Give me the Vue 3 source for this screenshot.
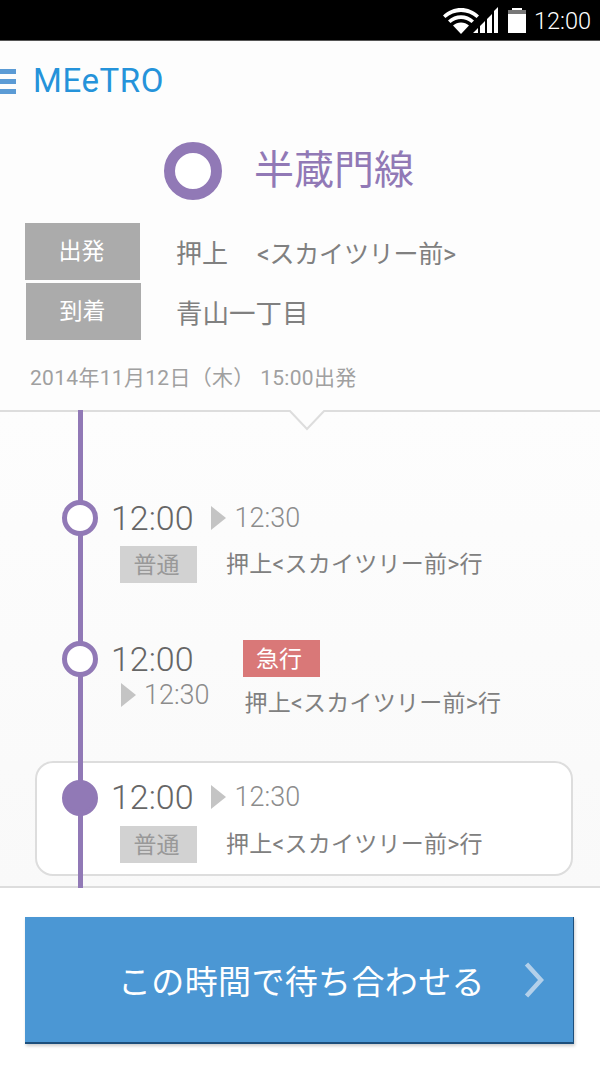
<script setup>
const dest = "押上<スカイツリー前>行";
</script>

<template>
  <div class="screen">
    <div class="status">
      <svg class="wifi" width="36" height="28" viewBox="0 0 36 28">
        <path d="M0 8.5C10-1.5 26-1.5 36 8.5L33.6 11C24.800 3 11.200 3 2.400 11Z" fill="#fff" />
        <path d="M5 13.500C12.500 6.500 23.500 6.500 31 13.500L28.500 16C22 10.500 14 10.500 7.500 16Z" fill="#fff" />
        <path d="M10 18.500C14.500 14.500 21.500 14.500 26 18.500L18 27Z" fill="#fff" />
      </svg>
      <svg class="signal" width="25" height="30" viewBox="0 0 25 30">
        <path d="M0 29L5 24V29ZM7 29V22L12 17V29ZM14 29V15L19 10V29ZM21 29V7L25 3V29Z" fill="#fff" />
      </svg>
      <svg class="battery" width="18" height="25" viewBox="0 0 18 25">
        <path d="M4 0H14V2H18V25H0V2H4Z" fill="#fff" />
        <path d="M0 2H18V6H0Z" fill="#777" />
      </svg>
      <span class="clock">12:00</span>
    </div>

    <header class="appbar">
      <div class="menu"><i></i><i></i><i></i></div>
      <span class="logo">MEeTRO</span>
    </header>

    <div class="line-title">
      <span class="ring"></span>
      <span class="line-name">半蔵門線</span>
    </div>

    <div class="stations">
      <div class="station">
        <span class="tag">出発</span>
        <span class="station-name">押上<span class="via">&lt;スカイツリー前&gt;</span></span>
      </div>
      <div class="station second">
        <span class="tag">到着</span>
        <span class="station-name">青山一丁目</span>
      </div>
    </div>

    <p class="date">2014年11月12日（木）&nbsp;15:00出発</p>

    <section class="timeline">
      <svg class="notch" width="38" height="21" viewBox="0 0 38 21">
        <path d="M1 0L19 19L37 0" fill="#fdfdfd" stroke="#dddddd" stroke-width="2" />
      </svg>
      <div class="track"></div>

      <div class="row first">
        <span class="node"></span>
        <div class="times">
          <span class="time">12:00</span>
          <span class="arrow"></span>
          <span class="arrive">12:30</span>
        </div>
        <div class="info">
          <span class="badge">普通</span>
          <span class="dest">{{ dest }}</span>
        </div>
      </div>

      <div class="row express">
        <span class="node"></span>
        <div class="left">
          <span class="time">12:00</span>
          <div class="sub">
            <span class="arrow"></span>
            <span class="arrive">12:30</span>
          </div>
        </div>
        <div class="right">
          <span class="badge red">急行</span>
          <span class="dest">{{ dest }}</span>
        </div>
      </div>

      <div class="row card">
        <span class="node solid"></span>
        <div class="times">
          <span class="time">12:00</span>
          <span class="arrow"></span>
          <span class="arrive">12:30</span>
        </div>
        <div class="info">
          <span class="badge">普通</span>
          <span class="dest">{{ dest }}</span>
        </div>
      </div>
    </section>

    <footer class="footer">
      <button class="go">
        <span>この時間で待ち合わせる</span>
        <svg class="chevron" width="20" height="36" viewBox="0 0 20 36">
          <path d="M2.500 2L17 18L2.500 34" fill="none" stroke="#b3d0ea" stroke-width="4.500" />
        </svg>
      </button>
    </footer>
  </div>
</template>

<style scoped>
.screen {
  width: 600px;
  height: 1067px;
  overflow: hidden;
  background: #fff;
  font-family: Roboto, "Noto Sans CJK JP", sans-serif;
  color: #808080;
}

.status {
  height: 40px;
  background: #000;
  border-bottom: 1px solid #555;
  box-sizing: content-box;
  display: flex;
  align-items: flex-start;
  justify-content: flex-end;
  padding-right: 9px;
}

.wifi {
  margin-top: 7px;
  margin-right: -6px;
}

.signal {
  margin-top: 4px;
  margin-right: 10px;
}

.battery {
  margin-top: 8px;
  margin-right: 8px;
}

.clock {
  color: #fff;
  font-size: 23.500px;
  font-weight: 300;
  line-height: 42px;
}

.appbar {
  height: 80px;
  display: flex;
  align-items: center;
  gap: 17px;
  background: #fdfdfd;
}

.menu {
  width: 16px;
  display: flex;
  flex-direction: column;
  gap: 5px;
}

.menu i {
  height: 5px;
  background: #5b9bd5;
}

.logo {
  color: #2593da;
  font-size: 33px;
  letter-spacing: 0.6px;
  line-height: 40px;
}

.line-title {
  height: 102px;
  padding: 21px 0 0 164px;
  box-sizing: border-box;
  display: flex;
  align-items: flex-start;
  gap: 32px;
  background: #fdfdfd;
}

.ring {
  width: 58px;
  height: 58px;
  box-sizing: border-box;
  border: 11px solid #9179b6;
  border-radius: 50%;
  background: #fff;
}

.line-name {
  color: #9179b6;
  font-size: 40px;
  line-height: 58px;
}

.stations {
  background: #fdfdfd;
  padding-left: 25px;
  display: flex;
  flex-direction: column;
  gap: 3px;
}

.station {
  display: flex;
  align-items: center;
  gap: 36px;
}

.station.second {
  padding-left: 1px;
}

.station.second .station-name {
  margin-left: -1px;
  font-size: 26.500px;
}

.tag {
  width: 115px;
  height: 57px;
  padding: 0 2px 5px 0;
  box-sizing: border-box;
  background: #ababab;
  color: #fff;
  font-size: 23px;
  display: flex;
  align-items: center;
  justify-content: center;
}

.station-name {
  font-size: 26px;
}

.via {
  margin-left: 29px;
  font-size: 25px;
  letter-spacing: -0.2px;
}

.date {
  margin: 0;
  height: 70px;
  padding: 24px 0 0 30px;
  box-sizing: border-box;
  background: #fdfdfd;
  color: #a0a0a0;
  font-size: 21px;
  letter-spacing: 0.3px;
  line-height: 28px;
}

.timeline {
  position: relative;
  height: 478px;
  box-sizing: border-box;
  background: linear-gradient(#fdfdfd, #f9f9f9);
  border-top: 2px solid #ddd;
  border-bottom: 2px solid #ddd;
  padding-top: 88px;
}

.notch {
  position: absolute;
  left: 288px;
  top: -2px;
}

.track {
  position: absolute;
  left: 78px;
  top: -2px;
  bottom: -2px;
  width: 5px;
  background: #9179b6;
  z-index: 2;
}

.row {
  position: relative;
}

.node {
  position: absolute;
  left: 62px;
  width: 36px;
  height: 36px;
  box-sizing: border-box;
  border: 5px solid #9179b6;
  border-radius: 50%;
  background: #fff;
  z-index: 3;
}

.node.solid {
  background: #9179b6;
}

.first {
  height: 141px;
  padding: 0 0 0 111px;
}

.first .node {
  top: 0;
}

.times {
  display: flex;
  align-items: center;
  height: 36px;
}

.time {
  color: #666;
  font-size: 34px;
  font-weight: 300;
  line-height: 36px;
}

.times .arrow {
  margin: 0 9px 0 17px;
}

.arrow {
  width: 0;
  height: 0;
  border-left: 15px solid #c4c4c4;
  border-top: 12px solid transparent;
  border-bottom: 12px solid transparent;
}

.arrive {
  color: #8c8c8c;
  font-size: 27px;
  font-weight: 300;
  line-height: 36px;
}

.info {
  display: flex;
  align-items: center;
  gap: 29px;
  margin: 10px 0 0 9px;
}

.card .info {
  margin-top: 11px;
}

.badge {
  width: 77px;
  height: 37px;
  padding: 0 4px 4px 0;
  box-sizing: border-box;
  flex: none;
  background: #d2d2d2;
  color: #999;
  font-size: 23px;
  display: flex;
  align-items: center;
  justify-content: center;
}

.badge.red {
  background: #d97878;
  color: #fff;
}

.dest {
  font-size: 23px;
  letter-spacing: 0.25px;
  line-height: 37px;
}

.express {
  height: 120px;
  padding-left: 111px;
  display: flex;
  gap: 33px;
}

.express .node {
  top: 0;
}

.sub {
  display: flex;
  align-items: center;
  gap: 8px;
  margin-left: 10px;
}

.right {
  display: flex;
  flex-direction: column;
  margin-top: -1px;
  gap: 8px;
}

.right .dest {
  margin-left: 2px;
}

.card {
  margin-left: 35px;
  width: 538px;
  height: 115px;
  box-sizing: border-box;
  background: #fff;
  border: 2px solid #ddd;
  border-radius: 18px;
  padding: 16px 0 0 74px;
}

.card .node {
  left: 25px;
  top: 17px;
}

.footer {
  padding: 29px 0 0 25px;
  background: #fff;
}

.go {
  width: 549px;
  height: 127px;
  box-sizing: border-box;
  padding: 0 29px 0 93px;
  border: none;
  border-right: 1px solid #1d4f7c;
  border-bottom: 2px solid #1d4f7c;
  box-shadow: 1px 2px 3px rgba(0, 0, 0, 0.2);
  background: #4b97d4;
  color: #fff;
  font-family: inherit;
  font-size: 33px;
  letter-spacing: 0.35px;
  display: flex;
  align-items: center;
  justify-content: space-between;
}
</style>

<style>
html,
body {
  margin: 0;
  background: #fff;
}
</style>
